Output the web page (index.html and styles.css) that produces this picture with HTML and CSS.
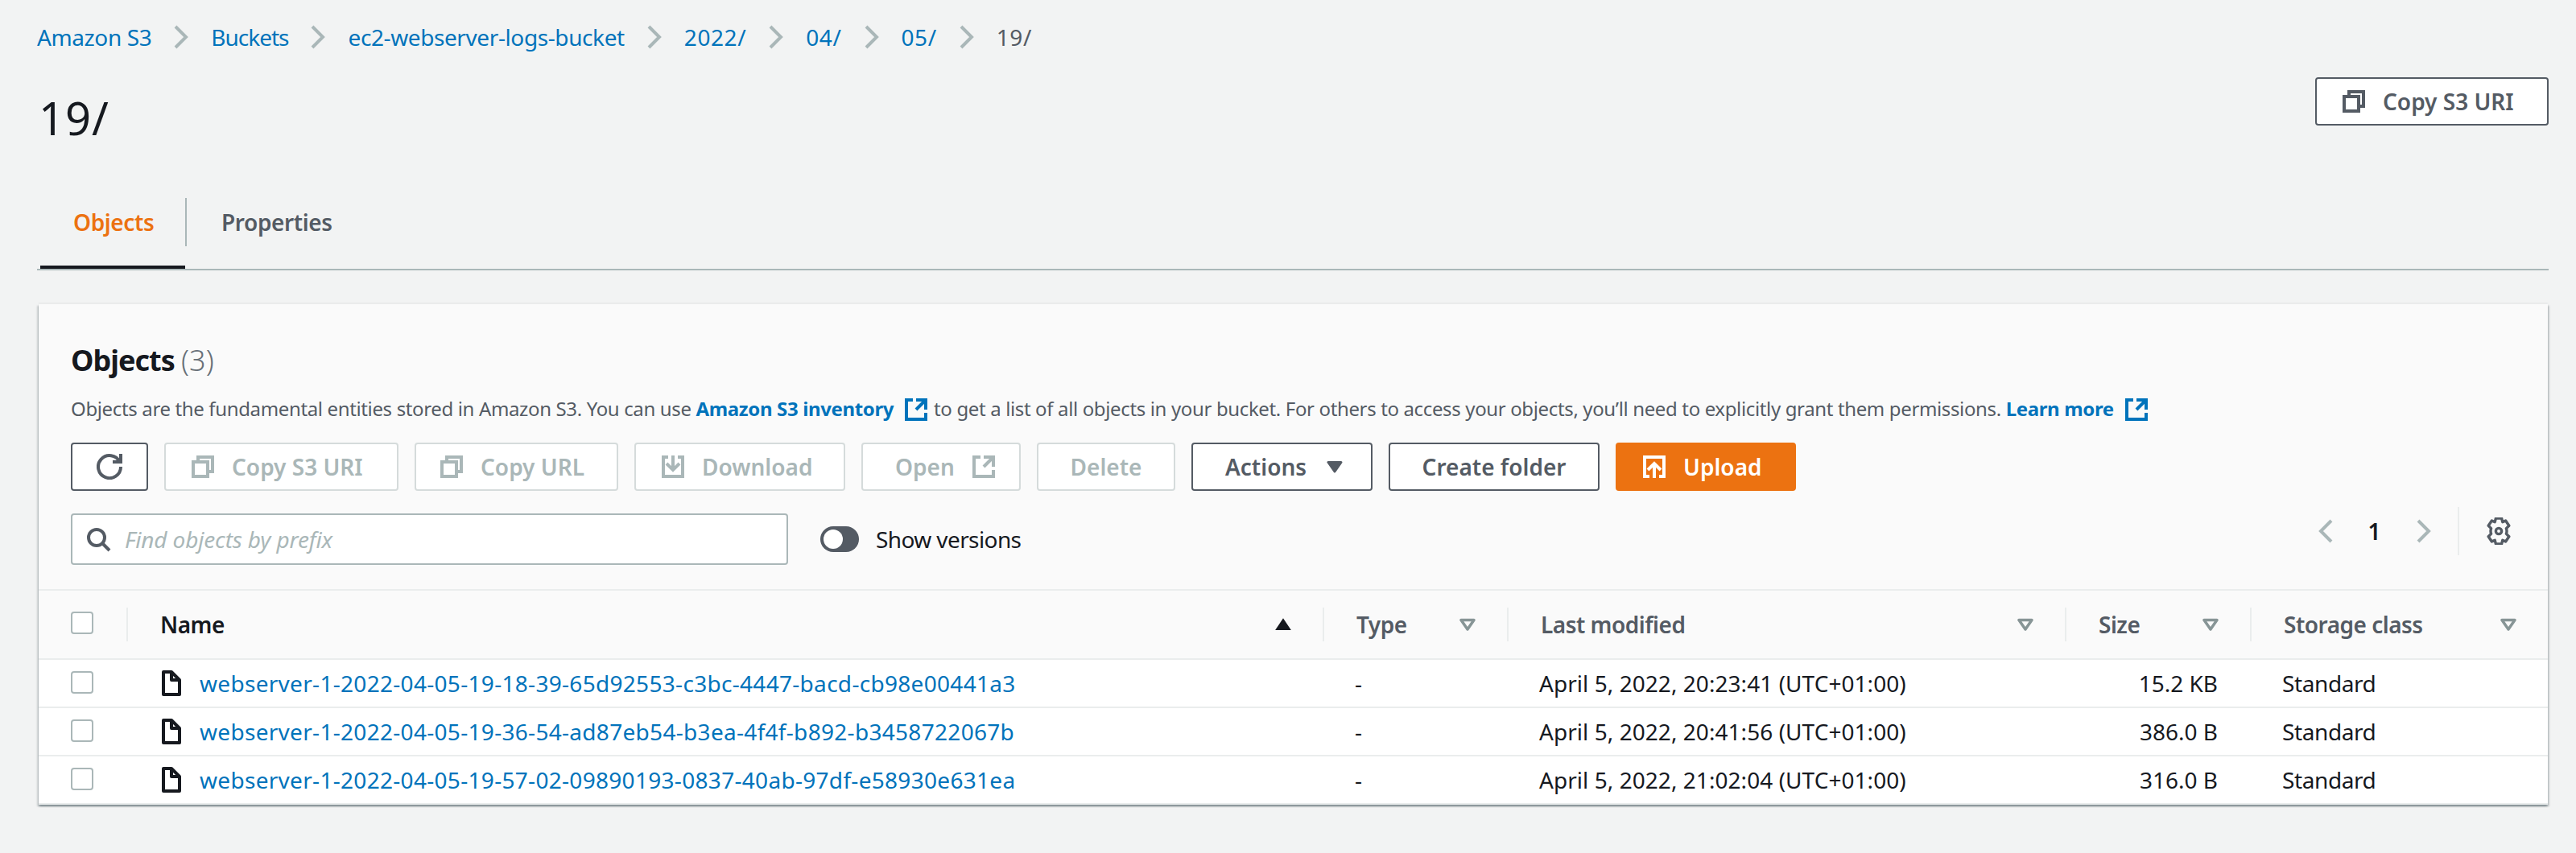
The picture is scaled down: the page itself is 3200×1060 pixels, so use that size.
FILE: index.html
```html
<!DOCTYPE html>
<html lang="en">
<head>
    <meta charset="UTF-8">
    <title>19/ - S3 bucket</title>
    <link rel="stylesheet" href="styles.css">
</head>
<body>
    <svg class="icon-defs" width="0" height="0">
        <defs>
            <symbol id="i-copy" viewBox="0 0 16 16"><path d="M2 5h9v9H2z"/><path d="M5 5V2h9v9h-3"/></symbol>
            <symbol id="i-refresh" viewBox="0 0 16 16"><path d="M10 5h5V0"/><path d="M15 8a7 7 0 1 1-.7-3"/></symbol>
            <symbol id="i-download" viewBox="0 0 16 16"><path d="M11 2h3v12H2V2h3"/><path d="M4 6l4 4 4-4"/><path d="M8 1v9"/></symbol>
            <symbol id="i-external" viewBox="0 0 16 16"><path d="M14 8V2H8"/><path d="M14 2L8 8"/><path d="M6 2H2v12h12v-4"/></symbol>
            <symbol id="i-upload" viewBox="0 0 16 16"><path d="M5 14H2V2h12v12h-3"/><path d="M12 10L8 6l-4 4"/><path d="M8 6v9"/></symbol>
            <symbol id="i-caret" viewBox="0 0 22 16"><path d="M3 2.500h16l-8 11.500z"/></symbol>
            <symbol id="i-file" viewBox="0 0 16 16"><path d="M3 1h5l5 5v9H3z"/><path d="M8 1v5h5"/></symbol>
        </defs>
    </svg>

    <nav class="breadcrumb">
        <a href="#">Amazon S3</a>
        <svg class="crumb-sep" viewBox="0 0 20 30"><path d="M3 2l13 13L3 28"/></svg>
        <a href="#" class="crumb-tight">Buckets</a>
        <svg class="crumb-sep" viewBox="0 0 20 30"><path d="M3 2l13 13L3 28"/></svg>
        <a href="#">ec2-webserver-logs-bucket</a>
        <svg class="crumb-sep" viewBox="0 0 20 30"><path d="M3 2l13 13L3 28"/></svg>
        <a href="#" class="crumb-num">2022/</a>
        <svg class="crumb-sep" viewBox="0 0 20 30"><path d="M3 2l13 13L3 28"/></svg>
        <a href="#" class="crumb-num">04/</a>
        <svg class="crumb-sep" viewBox="0 0 20 30"><path d="M3 2l13 13L3 28"/></svg>
        <a href="#" class="crumb-num">05/</a>
        <svg class="crumb-sep" viewBox="0 0 20 30"><path d="M3 2l13 13L3 28"/></svg>
        <span class="crumb-current crumb-num">19/</span>
    </nav>

    <header class="page-head">
        <h1>19/</h1>
        <button class="btn btn-start btn-top"><svg class="icon"><use href="#i-copy"/></svg>Copy S3 URI</button>
    </header>

    <div class="tabs">
        <div class="tab tab-active">Objects</div>
        <div class="tab">Properties</div>
    </div>

    <section class="card">
        <div class="card-head">
            <h2>Objects <span class="count">(3)</span></h2>
            <p class="desc">Objects are the fundamental entities stored in Amazon S3. You can use <a href="#" class="strong-link">Amazon S3 inventory<svg class="icon icon-ext"><use href="#i-external"/></svg></a> to get a list of all objects in your bucket. For others to access your objects, you’ll need to explicitly grant them permissions. <a href="#" class="strong-link">Learn more<svg class="icon icon-ext"><use href="#i-external"/></svg></a></p>
            <div class="actions">
                <button class="btn btn-refresh"><svg class="icon"><use href="#i-refresh"/></svg></button>
                <button class="btn btn-disabled btn-start w-copyuri"><svg class="icon"><use href="#i-copy"/></svg>Copy S3 URI</button>
                <button class="btn btn-disabled btn-start w-copyurl"><svg class="icon"><use href="#i-copy"/></svg>Copy URL</button>
                <button class="btn btn-disabled btn-start w-download"><svg class="icon"><use href="#i-download"/></svg>Download</button>
                <button class="btn btn-disabled btn-text-first w-open">Open<svg class="icon icon-after"><use href="#i-external"/></svg></button>
                <button class="btn btn-disabled w-delete">Delete</button>
                <button class="btn btn-text-first w-actions">Actions<svg class="caret-solid"><use href="#i-caret"/></svg></button>
                <button class="btn w-create">Create folder</button>
                <button class="btn btn-primary btn-start w-upload"><svg class="icon"><use href="#i-upload"/></svg>Upload</button>
            </div>
            <div class="filter-row">
                <div class="search">
                    <svg class="search-icon" viewBox="0 0 16 16"><circle cx="7" cy="7" r="5"/><path d="M15 15l-4.500-4.500"/></svg>
                    <span class="placeholder">Find objects by prefix</span>
                </div>
                <div class="toggle"><span class="knob"></span></div>
                <span class="toggle-label">Show versions</span>
                <div class="pager">
                    <svg class="pager-arrow" viewBox="0 0 20 30"><path d="M17 2L4 15l13 13"/></svg>
                    <span class="page-num">1</span>
                    <svg class="pager-arrow" viewBox="0 0 20 30"><path d="M3 2l13 13L3 28"/></svg>
                    <span class="pager-div"></span>
                    <svg class="gear" viewBox="3 1 26 30"><path d="M12.800 2h6.400l1 4 3.400-1.400 3.700 5.400-3 3a9 9 0 0 1 0 6l3 3-3.700 5.400-3.400-1.400-1 4h-6.400l-1-4-3.400 1.400-3.700-5.400 3-3a9 9 0 0 1 0-6l-3-3 3.700-5.400 3.400 1.400z"/><circle cx="16" cy="16" r="3.200"/></svg>
                </div>
            </div>
        </div>

        <div class="row row-head">
            <div class="cell cell-check"><span class="checkbox"></span></div>
            <div class="cell cell-div name-head"><span class="th-dark">Name</span><svg class="sort-icon" viewBox="0 0 22 16"><path d="M11 2l8 12H3z"/></svg></div>
            <div class="cell cell-div">Type<svg class="filter-icon"><use href="#i-caret"/></svg></div>
            <div class="cell cell-div">Last modified<svg class="filter-icon"><use href="#i-caret"/></svg></div>
            <div class="cell cell-div">Size<svg class="filter-icon"><use href="#i-caret"/></svg></div>
            <div class="cell cell-div">Storage class<svg class="filter-icon"><use href="#i-caret"/></svg></div>
        </div>

        <div class="row row-body">
            <div class="cell cell-check"><span class="checkbox"></span></div>
            <div class="cell"><svg class="file-icon"><use href="#i-file"/></svg><a href="#">webserver-1-2022-04-05-19-18-39-65d92553-c3bc-4447-bacd-cb98e00441a3</a></div>
            <div class="cell">-</div>
            <div class="cell">April 5, 2022, 20:23:41 (UTC+01:00)</div>
            <div class="cell cell-size">15.2 KB</div>
            <div class="cell cell-storage">Standard</div>
        </div>
        <div class="row row-body">
            <div class="cell cell-check"><span class="checkbox"></span></div>
            <div class="cell"><svg class="file-icon"><use href="#i-file"/></svg><a href="#">webserver-1-2022-04-05-19-36-54-ad87eb54-b3ea-4f4f-b892-b3458722067b</a></div>
            <div class="cell">-</div>
            <div class="cell">April 5, 2022, 20:41:56 (UTC+01:00)</div>
            <div class="cell cell-size">386.0 B</div>
            <div class="cell cell-storage">Standard</div>
        </div>
        <div class="row row-body">
            <div class="cell cell-check"><span class="checkbox"></span></div>
            <div class="cell"><svg class="file-icon"><use href="#i-file"/></svg><a href="#">webserver-1-2022-04-05-19-57-02-09890193-0837-40ab-97df-e58930e631ea</a></div>
            <div class="cell">-</div>
            <div class="cell">April 5, 2022, 21:02:04 (UTC+01:00)</div>
            <div class="cell cell-size">316.0 B</div>
            <div class="cell cell-storage">Standard</div>
        </div>
    </section>
</body>
</html>
```

FILE: styles.css
```css
* {
    box-sizing: border-box;
}

body {
    margin: 0;
    padding: 24px 34px 60px 46px;
    background-color: #f2f3f3;
    color: #16191f;
    font-family: "Noto Sans", sans-serif;
    font-size: 28px;
    line-height: 44px;
    letter-spacing: -0.4px;
}

a {
    color: #0073bb;
    text-decoration: none;
}

svg {
    fill: none;
    stroke: currentColor;
    stroke-width: 2;
}

.icon-defs {
    position: absolute;
}

/* breadcrumb */
.breadcrumb {
    display: flex;
    align-items: center;
    height: 44px;
}

.crumb-sep {
    width: 20px;
    height: 30px;
    margin: 0 27px;
    color: #aab7b8;
    stroke-width: 4;
}

.crumb-tight {
    letter-spacing: -1px;
}

.crumb-num {
    letter-spacing: 0.6px;
}

.crumb-current {
    color: #545b64;
}

/* title */
.page-head {
    display: flex;
    justify-content: space-between;
    align-items: flex-start;
    height: 178px;
    padding-top: 28px;
}

h1 {
    margin: 0;
    padding: 14px 0 0 2px;
    font-size: 56px;
    line-height: 72px;
    font-weight: 400;
    letter-spacing: 1px;
}

/* buttons */
.btn {
    display: inline-flex;
    align-items: center;
    justify-content: center;
    height: 60px;
    padding: 0;
    border: 2px solid #545b64;
    border-radius: 4px;
    background-color: #fff;
    color: #545b64;
    font-family: inherit;
    font-size: 28px;
    font-weight: 600;
    white-space: nowrap;
}

.btn-start {
    justify-content: flex-start;
    padding-left: 30px;
}

.btn-text-first {
    justify-content: flex-start;
    padding-left: 40px;
}

.btn-top {
    width: 290px;
}

.btn-disabled {
    border-color: #d5dbdb;
    color: #aab7b8;
}

.btn-primary {
    border-color: #ec7211;
    background-color: #ec7211;
    color: #fff;
}

.btn-refresh {
    width: 96px;
}

.btn-refresh .icon {
    margin: 0;
}

.w-copyuri { width: 291px; }
.w-copyurl { width: 253px; padding-left: 28px; }
.w-download { width: 262px; }
.w-open { width: 198px; }
.w-delete { width: 172px; }
.w-actions { width: 225px; }
.w-create { width: 262px; }
.w-upload { width: 224px; }

.icon {
    width: 32px;
    height: 32px;
    margin-right: 20px;
    flex-shrink: 0;
}

.icon-after {
    margin: 0 0 0 20px;
}

.caret-solid {
    width: 22px;
    height: 16px;
    margin-left: 24px;
    fill: currentColor;
    stroke-width: 3;
    stroke-linejoin: round;
}

/* tabs */
.tabs {
    display: flex;
    height: 90px;
    border-bottom: 2px solid #aab7b8;
    position: relative;
}

.tab {
    display: flex;
    align-items: center;
    height: 60px;
    padding: 0 40px;
    color: #545b64;
    font-weight: 600;
}

.tab-active {
    width: 186px;
    padding-left: 45px;
    border-right: 2px solid #aab7b8;
    color: #ec7211;
}

.tab-active::after {
    content: "";
    position: absolute;
    left: 4px;
    bottom: 0;
    width: 180px;
    height: 4px;
    background-color: #16191f;
}

.tab + .tab {
    padding-left: 43px;
}

/* card */
.card {
    width: 3117px;
    margin: 42px 0 0 2px;
    background-color: #fff;
    box-shadow: 0 2px 2px 0 rgba(0, 28, 36, 0.3), 2px 2px 2px 0 rgba(0, 28, 36, 0.15), -2px 2px 2px 0 rgba(0, 28, 36, 0.15), 0 -2px 2px 0 rgba(0, 28, 36, 0.04);
}

.card-head {
    height: 356px;
    padding: 48px 40px 0;
    background-color: #fafafa;
    border-bottom: 2px solid #eaeded;
}

h2 {
    margin: 0;
    font-size: 36px;
    line-height: 44px;
    font-weight: 700;
    letter-spacing: -1px;
}

.count {
    color: #687078;
    font-weight: 300;
    letter-spacing: 0;
}

.desc {
    margin: 18px 0 0;
    color: #545b64;
    font-size: 24px;
    line-height: 40px;
    letter-spacing: -0.36px;
    white-space: nowrap;
}

.strong-link {
    font-weight: 700;
}

.icon-ext {
    margin: 0 0 0 12px;
    vertical-align: -8px;
}

.actions {
    display: flex;
    gap: 20px;
    margin-top: 22px;
}

.filter-row {
    display: flex;
    align-items: center;
    height: 64px;
    margin-top: 28px;
}

.search {
    display: flex;
    align-items: center;
    width: 891px;
    height: 64px;
    padding-left: 16px;
    background-color: #fff;
    border: 2px solid #aab7b8;
    border-radius: 4px;
}

.search-icon {
    width: 32px;
    height: 32px;
    color: #545b64;
}

.placeholder {
    margin-left: 17px;
    color: #aab7b8;
    font-style: italic;
    letter-spacing: -0.15px;
}

.toggle {
    display: flex;
    align-items: center;
    width: 48px;
    height: 32px;
    margin-left: 40px;
    padding-left: 4px;
    border-radius: 16px;
    background-color: #545b64;
}

.knob {
    width: 24px;
    height: 24px;
    border-radius: 50%;
    background-color: #fff;
}

.toggle-label {
    margin-left: 21px;
    letter-spacing: -0.6px;
}

.pager {
    display: flex;
    align-items: center;
    margin: 0 4px 20px auto;
    color: #aab7b8;
}

.pager-arrow {
    width: 20px;
    height: 30px;
    stroke-width: 4;
}

.page-num {
    margin: 0 44px 0 42px;
    color: #16191f;
    font-weight: 600;
}

.pager-div {
    width: 2px;
    height: 60px;
    margin: 0 32px;
    background-color: #eaeded;
}

.gear {
    width: 34px;
    height: 34px;
    color: #545b64;
    stroke-width: 3;
    stroke-linejoin: round;
}

/* table */
.row {
    display: grid;
    grid-template-columns: 109px 1486px 229px 693px 230px 370px;
    align-items: center;
    border-bottom: 2px solid #eaeded;
}

.row-head {
    height: 86px;
    background-color: #fafafa;
    color: #545b64;
    font-weight: 600;
}

.row-body {
    height: 60px;
}

.cell {
    display: flex;
    align-items: center;
    height: 42px;
    padding-left: 40px;
    padding-right: 38px;
    border-left: 2px solid transparent;
    letter-spacing: 0.05px;
    white-space: nowrap;
}

.row-head .cell {
    letter-spacing: -0.5px;
}

.row-body .cell {
    padding-left: 38px;
}

.cell a {
    letter-spacing: 0.3px;
}

.cell-check {
    padding-left: 38px;
}

.cell-div {
    border-left-color: #eaeded;
    justify-content: space-between;
}

.th-dark {
    color: #16191f;
}

.cell-size {
    justify-content: flex-end;
    letter-spacing: 0;
}

.row-body .cell-size {
    padding-right: 40px;
}

.cell-storage {
    letter-spacing: -0.4px;
}

.checkbox {
    display: block;
    width: 28px;
    height: 28px;
    margin-bottom: 2px;
    border: 2px solid #aab7b8;
    border-radius: 4px;
    background-color: #fff;
}

.row-head .checkbox {
    margin-bottom: 4px;
}

.sort-icon {
    width: 22px;
    height: 16px;
    fill: #16191f;
    color: #16191f;
}

.filter-icon {
    width: 22px;
    height: 16px;
    color: #879596;
    stroke-width: 3.5;
    stroke-linejoin: round;
}

.file-icon {
    width: 32px;
    height: 32px;
    margin-right: 19px;
    stroke-linejoin: round;
}
```
